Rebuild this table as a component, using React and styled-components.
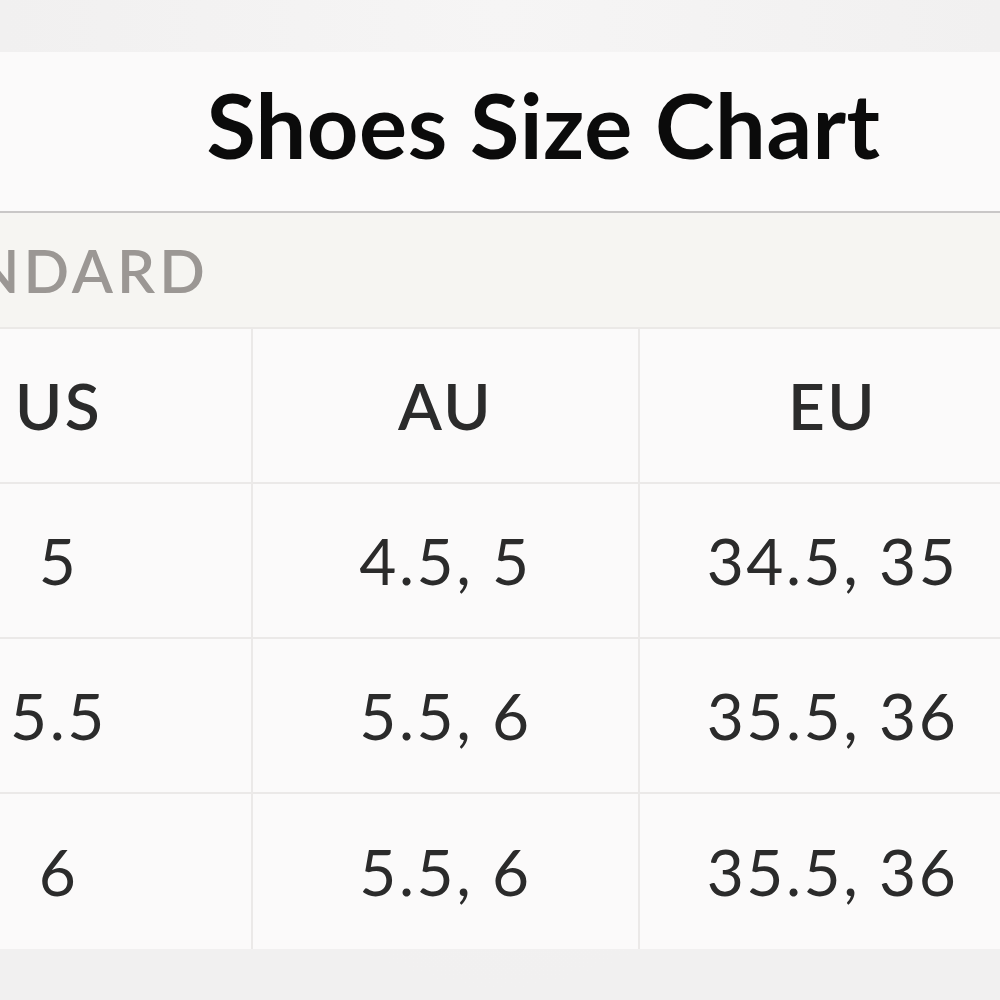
import React from "react";
import styled, { createGlobalStyle } from "styled-components";

const Global = createGlobalStyle`
  html, body { margin: 0; padding: 0; }
  body {
    font-family: Lato, "Open Sans", sans-serif;
    background: #f2f1f1;
  }
`;

const Page = styled.div`
  width: 1000px;
  height: 1000px;
  overflow: hidden;
  padding: 52px 0 0;
  box-sizing: border-box;
  background: radial-gradient(ellipse at 50% 0%, #f6f5f5 0%, #f1f0f0 70%);
`;

const Panel = styled.div`
  width: 1161px;
  margin-left: -134px;
  background: #fbfafa;
`;

const TitleBar = styled.div`
  height: 161px;
  display: flex;
  align-items: center;
  justify-content: center;
  padding: 0 0 16px 194px;
  box-sizing: border-box;
  border-bottom: 2px solid #c9c7c7;
`;

const Title = styled.h1`
  margin: 0;
  font-size: 90px;
  font-weight: 700;
  color: #0b0b0b;
  letter-spacing: 0.5px;
`;

const Band = styled.div`
  height: 114px;
  display: flex;
  align-items: center;
  padding-left: 0;
  background: #f6f5f2;
  border-bottom: 2px solid #ebe9e7;
`;

const BandLabel = styled.span`
  margin-left: -10px;
  font-size: 60px;
  font-weight: 600;
  color: #9b9794;
  letter-spacing: 4px;
`;

const Grid = styled.div`
  display: grid;
  grid-template-columns: repeat(3, 387px);
  grid-auto-rows: 155px;
`;

const Cell = styled.div`
  display: flex;
  align-items: center;
  justify-content: center;
  border-right: 2px solid #ebe9e8;
  border-bottom: ${p => (p.$last ? "none" : "2px solid #ebe9e8")};
  font-size: 64px;
  font-weight: ${p => (p.$head ? 600 : 400)};
  color: #2b2b2b;
  letter-spacing: 2.5px;
`;

const rows = [
  ["5", "4.5, 5", "34.5, 35"],
  ["5.5", "5.5, 6", "35.5, 36"],
  ["6", "5.5, 6", "35.5, 36"],
];

export default function App() {
  return (
    <>
      <Global />
      <Page>
        <Panel>
          <TitleBar>
            <Title>Shoes Size Chart</Title>
          </TitleBar>
          <Band>
            <BandLabel>STANDARD</BandLabel>
          </Band>
          <Grid>
            {["US", "AU", "EU"].map(h => (
              <Cell key={h} $head>{h}</Cell>
            ))}
            {rows.map((r, i) =>
              r.map((v, j) => (
                <Cell key={`${i}-${j}`} $last={i === rows.length - 1}>
                  {v}
                </Cell>
              ))
            )}
          </Grid>
        </Panel>
      </Page>
    </>
  );
}
